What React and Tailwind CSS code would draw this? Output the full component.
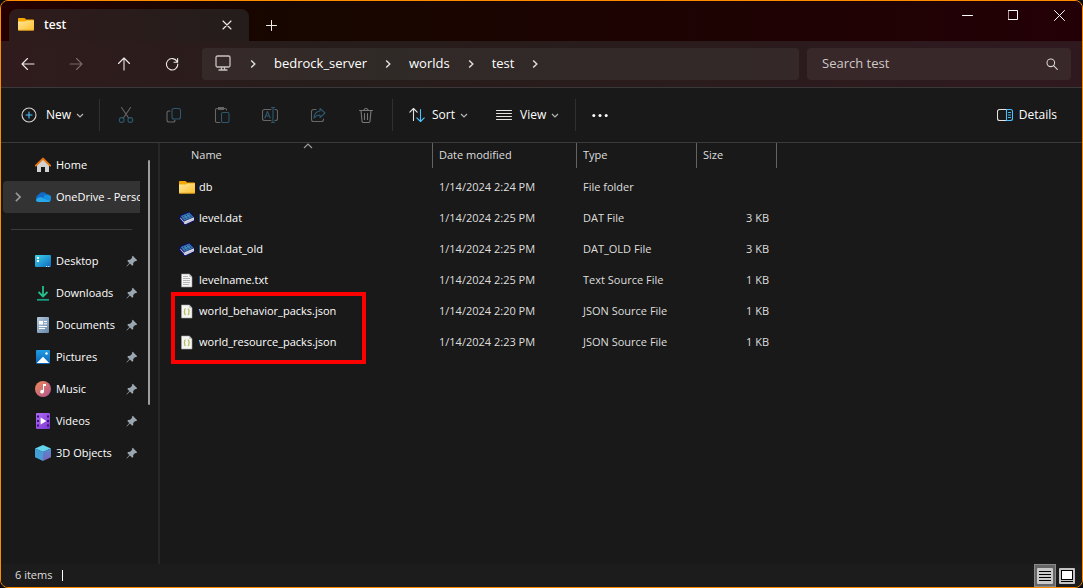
import React, { useState } from 'react';

const FolderIcon = () => (
    <svg width="16" height="16" viewBox="0 1 16 16" className="shrink-0">
        <defs>
            <linearGradient id="folder" x1="0" y1="0" x2="1" y2="1">
                <stop offset="0" stopColor="#ffe79c" />
                <stop offset="1" stopColor="#fcc02d" />
            </linearGradient>
        </defs>
        <path d="M0 2.800C0 2.300.3 2 .8 2h5.400c.5 0 .8.200 1 .5L8 3.400h7c.6 0 1 .3 1 .8V10H0z" fill="#f5a700" />
        <path d="M0 5.600h6.400c.5 0 .9-.2 1.200-.5l.7-.7H16v9.400c0 .4-.3.600-.7.600H.7c-.4 0-.7-.2-.7-.6z" fill="url(#folder)" />
        <path d="M0 13.800h16c0 .4-.3.600-.7.600H.7c-.4 0-.7-.2-.7-.6z" fill="#dd9a10" />
    </svg>
);

const BookIcon = () => (
    <svg width="16" height="16" viewBox="0 0 16 16" className="shrink-0">
        <path d="M.5 4.500 10.500.6 15.500 6v4L6.500 14.200l-2-.7-4-5z" fill="#0b1070" />
        <path d="M5.400 10.200 15 6.200v3l-8.600 4-1.500-.6z" fill="#dedee8" />
        <path d="m6 12 8.800-4" stroke="#a8a8c0" strokeWidth=".6" />
        <path d="M1.300 6.300 5.200 10.800l.2 1.500L1.400 7.800z" fill="#c9c9d4" />
        <path d="M1.700 5 10.200 1.600l4.300 4.300-9.100 3.800z" fill="#3b7dae" />
        <path d="m4 4.600 3.100 3.900M6.700 3.500l3.100 3.900M9.300 2.500l3.200 3.800" stroke="#163f83" />
        <path d="m5.200 6.400 6-2.400" stroke="#4f93bd" strokeWidth=".8" />
    </svg>
);

const TextFileIcon = () => (
    <svg width="16" height="16" viewBox="0 0 16 16" className="shrink-0">
        <path d="M2.500 1h7.800L13 3.700V14H2.500z" fill="#f5f5f5" stroke="#9a9a9a" strokeWidth=".6" />
        <path d="M10.300 1v2.700H13z" fill="#b4b4b4" />
        <path d="M4 3.500h5M4 5.500h7M4 7.500h7M4 9.500h7M4 11.500h6" stroke="#a5a5a5" strokeWidth=".8" />
    </svg>
);

const JsonFileIcon = () => (
    <svg width="16" height="16" viewBox="0 0 16 16" className="shrink-0">
        <path d="M2.500 1h7.800L13 3.700V14H2.500z" fill="#f5f5f2" stroke="#a5a5a5" strokeWidth=".6" />
        <path d="M10.300 1v2.700H13z" fill="#b4b4b4" />
        <path d="M6.700 4.800c-1.200 0-1 .8-1 1.600s-.2 1.300-.9 1.300c.7 0 .9.500.9 1.300s-.2 1.600 1 1.600M8.800 4.800c1.200 0 1 .8 1 1.600s.2 1.300.9 1.300c-.7 0-.9.500-.9 1.300s.2 1.600-1 1.600" fill="none" stroke="#b4ba5c" strokeWidth="1.200" />
    </svg>
);

const HomeIcon = () => (
    <svg width="16" height="16" viewBox="0 0 16 16">
        <path d="M2 7.500 8 2l6 5.500V15h-4v-5H6v5H2z" fill="#d2d2d2" />
        <path d="M.8 8.600 8 1.600l7.200 7" fill="none" stroke="#e8740f" strokeWidth="2" strokeLinecap="round" strokeLinejoin="round" />
    </svg>
);

const CloudIcon = () => (
    <svg width="16" height="16" viewBox="0 0 16 16">
        <path d="M3.600 12.500A3.500 3.500 0 0 1 3.400 5.800 4.900 4.900 0 0 1 12.300 6.700L8 10z" fill="#0f6cc8" />
        <path d="M8.500 8.500A3.600 3.600 0 0 1 16 10c0 1.700-1.300 3-3 3H9z" fill="#1590df" />
        <path d="M.8 11.200c1-1.700 2.600-2.900 4.600-2.900 2.400 0 3.800 1.600 5.600 2.400 1.500.7 3 .7 4.400 1-.6.800-1.500 1.300-2.500 1.300H3.600c-1.200 0-2.200-.7-2.800-1.800z" fill="#28a8ea" />
    </svg>
);

const DesktopIcon = () => (
    <svg width="16" height="16" viewBox="0 0 16 16">
        <defs>
            <linearGradient id="desk" x1="0" y1="0" x2="1" y2="1">
                <stop offset="0" stopColor="#38d6ea" />
                <stop offset="1" stopColor="#1266c0" />
            </linearGradient>
        </defs>
        <rect y="2" width="16" height="12" rx="1" fill="url(#desk)" />
        <path d="M2 4h2v2H2zM2 7h2v2H2z" fill="#fff" />
        <path d="M11 13.500h1.200M13.200 13.500h1.200" stroke="#c9f1ff" />
    </svg>
);

const DownloadIcon = () => (
    <svg width="16" height="16" viewBox="0 0 16 16" fill="none" strokeWidth="1.800">
        <path d="M8 1v10M3.500 7 8 11.400 12.500 7" stroke="#25bd8b" />
        <path d="M2 14.800h12" stroke="#17a083" />
    </svg>
);

const DocumentIcon = () => (
    <svg width="16" height="16" viewBox="0 0 16 16">
        <defs>
            <linearGradient id="docs" x1="0" y1="0" x2="1" y2="1">
                <stop offset="0" stopColor="#b5c9dc" />
                <stop offset="1" stopColor="#6687a8" />
            </linearGradient>
        </defs>
        <rect x="2" width="12" height="16" rx="1" fill="url(#docs)" />
        <path d="M4 4h4v3.500H4z" fill="#fff" />
        <path d="M9 4.500h3M9 6.800h3M4 9.500h8M4 11.500h6" stroke="#fff" />
    </svg>
);

const PictureIcon = () => (
    <svg width="16" height="16" viewBox="0 0 16 16">
        <defs>
            <linearGradient id="pics" x1="0" y1="0" x2="0" y2="1">
                <stop offset="0" stopColor="#1f9de6" />
                <stop offset="1" stopColor="#0c62b4" />
            </linearGradient>
        </defs>
        <rect x="1" y="1" width="14" height="14" rx="1" fill="url(#pics)" />
        <path d="m1.800 14 5.400-5.600c.5-.5 1.100-.5 1.600 0L14.200 14z" fill="#fff" />
        <circle cx="11.500" cy="4.500" r="1.200" fill="#fff" />
    </svg>
);

const MusicIcon = () => (
    <svg width="16" height="16" viewBox="0 0 16 16">
        <defs>
            <linearGradient id="music" x1="0" y1="0" x2="1" y2="1">
                <stop offset="0" stopColor="#f08a55" />
                <stop offset="1" stopColor="#b05590" />
            </linearGradient>
        </defs>
        <circle cx="8" cy="8" r="8" fill="url(#music)" />
        <path d="M8 3h3v2H9v5.800A1.900 1.900 0 1 1 8 9z" fill="#fff" />
    </svg>
);

const VideoIcon = () => (
    <svg width="16" height="16" viewBox="0 0 16 16">
        <defs>
            <linearGradient id="video" x1="0" y1="0" x2="1" y2="1">
                <stop offset="0" stopColor="#b06cf5" />
                <stop offset="1" stopColor="#7c35d0" />
            </linearGradient>
        </defs>
        <rect x="1" width="14" height="16" rx="1" fill="url(#video)" />
        <path d="M2 2.500h2v2H2zM2 7h2v2H2zM2 11.500h2v2H2zM12 2.500h2v2h-2zM12 7h2v2h-2zM12 11.500h2v2h-2z" fill="#3b1173" />
        <path d="M5.600 4.600 11.400 8l-5.800 3.400z" fill="#fff" />
    </svg>
);

const CubeIcon = () => (
    <svg width="16" height="16" viewBox="0 0 16 16">
        <defs>
            <linearGradient id="cube" x1="0" y1="0" x2="0" y2="1">
                <stop offset="0" stopColor="#4f8fd6" />
                <stop offset="1" stopColor="#8460b4" />
            </linearGradient>
        </defs>
        <path d="m8 0 8 3.500L8 7 0 3.500z" fill="#62d4ec" />
        <path d="m0 3.500 8 3.500v9l-8-3.700z" fill="#449fd6" />
        <path d="M16 3.500 8 7v9l8-3.700z" fill="url(#cube)" />
    </svg>
);

const PinIcon = () => (
    <svg width="12" height="12" viewBox="0 0 12 12" className="shrink-0">
        <path d="M6.800.8 11.200 5.200 10 6.200 9.200 6 7.200 8 7.200 10 6.200 10.800 3.900 8.600.8 11.500.4 11.200 3.300 8 1.300 5.900 2.100 4.900l2-.1 2-2L5.900 1.700z" fill="#9aa5ae" />
    </svg>
);

const Chevron = ({ d = 'm2 4 3 3 3-3', size = 10, color = '#b5b5b5' }) => (
    <svg width={size} height={size} viewBox="0 0 10 10" fill="none" stroke={color} strokeWidth="1.200" className="shrink-0">
        <path d={d} />
    </svg>
);

const Stroke = ({ children, color = '#e6e2e1', size = 16, width = 1.1 }) => (
    <svg width={size} height={size} viewBox={`0 0 ${size} ${size}`} fill="none" stroke={color} strokeWidth={width} strokeLinecap="round" strokeLinejoin="round" className="shrink-0">
        {children}
    </svg>
);

const RIGHT = 'm3.500 2 3 3-3 3';

const navButtons = [
    { label: 'Back', color: '#eee9e8', icon: <path d="M14 8H2.200M7.500 2.500 2 8l5.500 5.500" /> },
    { label: 'Forward', color: '#77696a', icon: <path d="M2 8h11.800M8.500 2.500 14 8l-5.500 5.500" /> },
    { label: 'Up', color: '#eee9e8', icon: <path d="M8 14V2.200M2.500 7.500 8 2l5.500 5.500" /> },
    { label: 'Refresh', color: '#eee9e8', icon: <path d="M13.200 5.700A5.700 5.700 0 1 0 13.800 8M13.600 2.500V6.200H10" /> }
];

const tools = [
    {
        label: 'Cut',
        icon: (
            <>
                <path d="M3.500.5 10.600 11M12.500.5 5.400 11" stroke="#666" />
                <circle cx="3.700" cy="13" r="2.400" />
                <circle cx="12.300" cy="13" r="2.400" />
            </>
        )
    },
    {
        label: 'Copy',
        icon: (
            <>
                <path d="M4 4H3a2 2 0 0 0-2 2v7a2 2 0 0 0 2 2h4a2 2 0 0 0 2-2" stroke="#666" />
                <rect x="6" y="1.500" width="8.500" height="10.500" rx="2" />
            </>
        )
    },
    {
        label: 'Paste',
        icon: (
            <>
                <path d="M6 15.500H3A1.500 1.500 0 0 1 1.500 14V3A1.500 1.500 0 0 1 3 1.500h8A1.500 1.500 0 0 1 12.500 3M4.500 .5h5v2h-5z" stroke="#666" />
                <rect x="7.500" y="5.500" width="7.500" height="10" rx="1.500" />
            </>
        )
    },
    {
        label: 'Rename',
        icon: (
            <>
                <path d="M9 13.500H2.500a2 2 0 0 1-2-2v-7a2 2 0 0 1 2-2H9M13 2.500h.5a2 2 0 0 1 2 2v7a2 2 0 0 1-2 2H13" stroke="#666" />
                <path d="M11 .5v15M9.500 .5h3M9.500 15.500h3M2.800 11l2.700-6.500L8.200 11M3.700 9h3.600" />
            </>
        )
    },
    {
        label: 'Share',
        icon: (
            <>
                <path d="M6 2.500H3.500a2 2 0 0 0-2 2v8a2 2 0 0 0 2 2h8a2 2 0 0 0 2-2V12" stroke="#666" />
                <path d="M10 1.500 15 6l-5 4.500V8C7 8 5.500 9 4 11c.2-4 2.200-6.500 6-7z" />
            </>
        )
    },
    {
        label: 'Delete',
        icon: <path d="M1.500 3.500h13M6 3.500a2 2 0 0 1 4 0M3 3.500l1 10.500a1.500 1.500 0 0 0 1.500 1.500h5A1.500 1.500 0 0 0 12 14l1-10.500M6.500 6.500v6M9.500 6.500v6" stroke="#777" />
    }
];

const quickAccess = [
    { name: 'Desktop', icon: <DesktopIcon /> },
    { name: 'Downloads', icon: <DownloadIcon /> },
    { name: 'Documents', icon: <DocumentIcon /> },
    { name: 'Pictures', icon: <PictureIcon /> },
    { name: 'Music', icon: <MusicIcon /> },
    { name: 'Videos', icon: <VideoIcon /> },
    { name: '3D Objects', icon: <CubeIcon /> }
];

const files = [
    { name: 'db', icon: <FolderIcon />, date: '1/14/2024 2:24 PM', type: 'File folder', size: '' },
    { name: 'level.dat', icon: <BookIcon />, date: '1/14/2024 2:25 PM', type: 'DAT File', size: '3 KB' },
    { name: 'level.dat_old', icon: <BookIcon />, date: '1/14/2024 2:25 PM', type: 'DAT_OLD File', size: '3 KB' },
    { name: 'levelname.txt', icon: <TextFileIcon />, date: '1/14/2024 2:25 PM', type: 'Text Source File', size: '1 KB' },
    { name: 'world_behavior_packs.json', icon: <JsonFileIcon />, date: '1/14/2024 2:20 PM', type: 'JSON Source File', size: '1 KB' },
    { name: 'world_resource_packs.json', icon: <JsonFileIcon />, date: '1/14/2024 2:23 PM', type: 'JSON Source File', size: '1 KB' }
];

const TitleBar = () => (
    <div className="flex h-10 items-end justify-between bg-linear-to-r from-[#250000] via-[#170600] via-25% to-[#230006]">
        <div className="flex items-end pl-2">
            <div className="flex h-8 w-60 items-center justify-between rounded-t-lg bg-linear-to-r from-[#2e1b1b] to-[#241d1b] pl-[9px] pr-3">
                <div className="flex items-center gap-2.5">
                    <FolderIcon />
                    <span className="text-xs font-semibold text-white">test</span>
                </div>
                <button aria-label="Close tab" className="flex h-5 w-5 items-center justify-center">
                    <Stroke size={10} color="#f0ecec"><path d="m1 1 8 8M9 1 1 9" /></Stroke>
                </button>
            </div>
            <button aria-label="New tab" className="flex h-8 w-11 items-center justify-center">
                <Stroke size={11} color="#f0ecec" width={1}><path d="M5.500 .5v10M.5 5.500h10" /></Stroke>
            </button>
        </div>
        <div className="flex self-start">
            <button aria-label="Minimize" className="flex h-7 w-[46px] items-center justify-center">
                <Stroke size={11} color="#fff" width={1}><path d="M.5 5.500h10" /></Stroke>
            </button>
            <button aria-label="Maximize" className="flex h-7 w-[46px] items-center justify-center">
                <Stroke size={11} color="#fff" width={1}><path d="M.5 .5h9v9h-9z" /></Stroke>
            </button>
            <button aria-label="Close" className="flex h-7 w-[46px] items-center justify-center">
                <Stroke size={11} color="#fff" width={1}><path d="m.5 .5 10 10M10.500 .5l-10 10" /></Stroke>
            </button>
        </div>
    </div>
);

const AddressBar = () => {
    const [query, setQuery] = useState('');

    return (
        <div className="flex h-[47px] items-center border-b border-[#3a3838] bg-linear-to-r from-[#301b1c] via-[#261d1a] via-30% to-[#2f191f] pl-[3px] pr-[11px]">
            {navButtons.map((b) => (
                <button key={b.label} aria-label={b.label} className="flex h-8 w-12 items-center justify-center">
                    <Stroke color={b.color} size={16}>{b.icon}</Stroke>
                </button>
            ))}
            <nav className="ml-1.5 flex h-8 flex-1 items-center gap-[15px] rounded bg-linear-to-r from-[#362a29] via-[#302a27] via-30% to-[#342829] pl-3 text-[13px] text-white">
                <Stroke size={18} color="#c9c4c3" width={1.3}>
                    <path d="M3.500 1h11A1.500 1.500 0 0 1 16 2.500v8a1.500 1.500 0 0 1-1.500 1.500h-11A1.500 1.500 0 0 1 2 10.500v-8A1.500 1.500 0 0 1 3.500 1zM7.500 12v3M10.500 12v3M5 15h8" />
                </Stroke>
                <Chevron d={RIGHT} size={12} color="#ddd" />
                <a href="#bedrock_server">bedrock_server</a>
                <Chevron d={RIGHT} size={12} color="#ddd" />
                <a href="#worlds">worlds</a>
                <Chevron d={RIGHT} size={12} color="#ddd" />
                <a href="#test">test</a>
                <Chevron d={RIGHT} size={12} color="#ddd" />
            </nav>
            <label className="ml-2 flex h-8 w-[264px] items-center rounded bg-[#38282a] pl-[15px] pr-[13px]">
                <input
                    type="text"
                    aria-label="Search test"
                    placeholder="Search test"
                    value={query}
                    onChange={(e) => setQuery(e.target.value)}
                    className="min-w-0 flex-1 bg-transparent text-[13px] text-white outline-none placeholder:text-[#cfc8c8]"
                />
                <Stroke size={12} color="#d8d2d2">
                    <circle cx="4.800" cy="4.800" r="3.800" />
                    <path d="m7.600 7.600 3.700 3.700" />
                </Stroke>
            </label>
        </div>
    );
};

const Toolbar = () => (
    <div className="flex h-[55px] items-center justify-between border-b border-[#3a3a3a] bg-[#191919] text-xs text-white">
        <div className="flex items-center">
            <button className="flex h-8 w-[98px] items-center pl-5">
                <Stroke size={16} color="#d5d5d5">
                    <circle cx="8" cy="8" r="7" />
                    <path d="M8 5v6M5 8h6" stroke="#4cc2ff" />
                </Stroke>
                <span className="ml-[9px] mr-1">New</span>
                <Chevron />
            </button>
            <div className="flex h-8 items-center border-x border-[#303030] px-0.5">
                {tools.map((t) => (
                    <button key={t.label} aria-label={t.label} disabled className="flex h-8 w-12 items-center justify-center">
                        <Stroke color="#2b5870" size={16}>{t.icon}</Stroke>
                    </button>
                ))}
            </div>
            <div className="flex h-8 items-center border-r border-[#303030]">
                <button className="flex h-8 w-[88px] items-center pl-4">
                    <Stroke size={16}>
                        <path d="M4.500 13.500v-12M.8 5.200 4.500 1.500l3.700 3.700" />
                        <path d="M11.500 2.500v12M7.800 10.800l3.700 3.700 3.700-3.700" stroke="#4cc2ff" />
                    </Stroke>
                    <span className="ml-[7px] mr-1">Sort</span>
                    <Chevron />
                </button>
                <button className="flex h-8 w-[94px] items-center pl-[15px]">
                    <Stroke size={16} width={1}>
                        <path d="M.5 3.500h15M.5 6.500h15M.5 9.500h15M.5 12.500h15" />
                    </Stroke>
                    <span className="ml-2 mr-1">View</span>
                    <Chevron />
                </button>
            </div>
            <button aria-label="See more" className="flex h-8 w-12 items-center justify-center">
                <svg width="16" height="16" viewBox="0 0 16 16" fill="#fff">
                    <circle cx="1.800" cy="8.500" r="1.500" />
                    <circle cx="8" cy="8.500" r="1.500" />
                    <circle cx="14.200" cy="8.500" r="1.500" />
                </svg>
            </button>
        </div>
        <button className="flex h-8 items-center gap-1.5 pr-[25px]">
            <Stroke size={16}>
                <path d="M9.500 2.500h-7a2 2 0 0 0-2 2v7a2 2 0 0 0 2 2h7" />
                <path d="M9.500 2.500h4a2 2 0 0 1 2 2v7a2 2 0 0 1-2 2h-4zM11.500 5.500h2M11.500 8h2M11.500 10.500h2" stroke="#4cc2ff" />
            </Stroke>
            Details
        </button>
    </div>
);

const Sidebar = () => (
    <aside className="flex w-[159px] shrink-0 justify-between border-r-2 border-[#272727] text-[11px] text-white">
        <div className="w-[139px] pl-0.5 pt-1.5">
            <a href="#home" className="flex h-8 items-center gap-[5px] pl-8">
                <HomeIcon />
                Home
            </a>
            <a href="#onedrive" className="flex h-8 items-center overflow-hidden rounded-l-sm bg-[#333] pl-2">
                <Chevron d={RIGHT} size={14} color="#999" />
                <span className="ml-2.5 mr-[5px] shrink-0"><CloudIcon /></span>
                <span className="whitespace-nowrap">OneDrive - Personal</span>
            </a>
            <div className="flex h-8 items-center px-2">
                <hr className="w-full border-[#3c3c3c]" />
            </div>
            {quickAccess.map((item) => (
                <a key={item.name} href={`#${item.name}`} className="flex h-8 items-center justify-between pl-8 pr-0.5">
                    <span className="flex items-center gap-[5px] whitespace-nowrap">
                        {item.icon}
                        {item.name}
                    </span>
                    <PinIcon />
                </a>
            ))}
        </div>
        <div className="mr-2 mt-[17px] h-[245px] w-0.5 rounded bg-[#9d9d9d]" />
    </aside>
);

const FileList = () => (
    <main className="relative min-w-0 flex-1">
        <table className="w-[617px] table-fixed text-left text-[11px] text-[#dedede]">
            <colgroup>
                <col className="w-[273px]" />
                <col className="w-[144px]" />
                <col className="w-[120px]" />
                <col className="w-[80px]" />
            </colgroup>
            <thead>
                <tr className="h-[29px] align-top">
                    {['Name', 'Date modified', 'Type', 'Size'].map((h) => (
                        <th key={h} className="p-0 font-normal">
                            <div className={`flex h-[25px] items-center border-r border-[#636363] ${h === 'Name' ? 'pl-[31px]' : 'pl-1.5'}`}>{h}</div>
                        </th>
                    ))}
                </tr>
            </thead>
            <tbody>
                {files.map((f) => (
                    <tr key={f.name} className="h-[31px]">
                        <td className="p-0 pl-[19px] text-white">
                            <span className="flex items-center gap-1">
                                {f.icon}
                                {f.name}
                            </span>
                        </td>
                        <td className="p-0 pl-1.5">{f.date}</td>
                        <td className="p-0 pl-1.5">{f.type}</td>
                        <td className="p-0 pr-2 text-right">{f.size}</td>
                    </tr>
                ))}
            </tbody>
        </table>
        {/* sort direction marker above the name column */}
        <div className="absolute left-[143px] top-0">
            <Chevron d="m1 5 4-4 4 4" color="#9a9a9a" />
        </div>
        <div className="pointer-events-none absolute left-[11px] top-[149px] h-[72px] w-[195px] border-4 border-[#ff0000]" />
    </main>
);

const StatusBar = () => (
    <footer className="flex h-[23px] items-center justify-between bg-[#1c1c1c] pl-3.5 pr-[5px] text-[11px] text-[#dedede]">
        <div className="flex items-center gap-2.5">
            6 items
            <span className="h-[11px] w-px bg-white" />
        </div>
        <div className="flex items-center gap-px">
            <button aria-label="Details view" className="flex h-[23px] w-[22px] items-center justify-center border border-[#8a8a8a] bg-[#666]">
                <svg width="16" height="16" viewBox="0 0 16 16">
                    <rect width="16" height="16" rx="1" fill="#c9c9c9" />
                    <path d="M2 3.500h12M2 6.500h12M2 9.500h12M2 12.500h12" stroke="#000" />
                </svg>
            </button>
            <button aria-label="Large icons view" className="flex h-[23px] w-5 items-center justify-center">
                <svg width="16" height="16" viewBox="0 0 16 16">
                    <rect width="16" height="16" rx="1" fill="#c4c4c4" />
                    <rect x="2.500" y="2.500" width="11" height="9" fill="#fff" stroke="#000" />
                    <path d="M2 13.500h12" stroke="#000" />
                </svg>
            </button>
        </div>
    </footer>
);

const App = () => (
    <div className="min-h-screen bg-[#0c0c10]">
        <div className="flex min-h-screen flex-col overflow-hidden rounded-lg border border-[#ff8c00] bg-[#191919] font-['Open_Sans','Noto_Sans',sans-serif]">
            <TitleBar />
            <AddressBar />
            <Toolbar />
            <div className="flex flex-1">
                <Sidebar />
                <FileList />
            </div>
            <StatusBar />
        </div>
    </div>
);

export default App;
